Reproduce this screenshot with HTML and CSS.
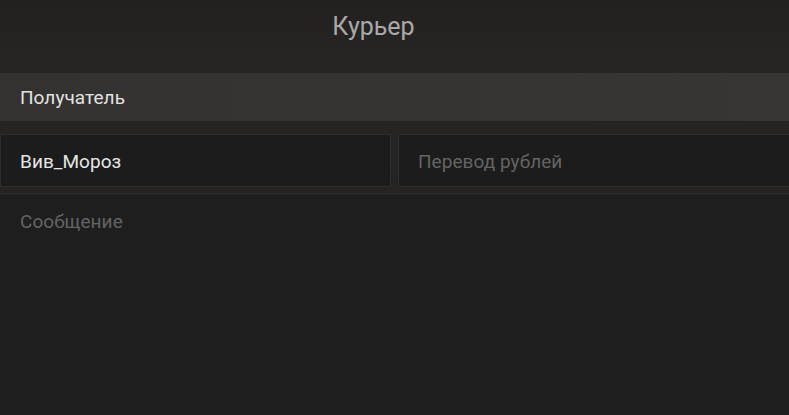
FILE: index.html
```html
<!DOCTYPE html>
<html lang="ru">
<head>
<meta charset="utf-8">
<title>Курьер</title>
<link rel="stylesheet" href="styles.css">
</head>
<body>
<div class="top">
  <header class="header">Курьер</header>
  <div class="recipient">Получатель</div>
  <div class="fields">
    <div class="field value">Вив_Мороз</div>
    <div class="field placeholder">Перевод рублей</div>
  </div>
</div>
<div class="message placeholder">Сообщение</div>
</body>
</html>
```
FILE: styles.css
```css
html, body {
  margin: 0;
  height: 100%;
}
body {
  background: #1e1e1e;
  font-family: Roboto, "Noto Sans", sans-serif;
  font-size: 19px;
  letter-spacing: 0.05px;
  overflow: hidden;
  display: flex;
  flex-direction: column;
}
.top {
  background: linear-gradient(180deg, #222120 0%, #272524 30%, #262423 100%);
  padding-bottom: 6px;
  border-bottom: 2px solid #2a2928;
}
.header {
  height: 52px;
  display: flex;
  align-items: center;
  justify-content: center;
  font-size: 25px;
  letter-spacing: 0;
  color: #a9a9a9;
  padding-right: 42px;
  padding-top: 1px;
  box-sizing: border-box;
  margin-bottom: 21px;
}
.recipient {
  height: 48px;
  display: flex;
  align-items: center;
  padding-left: 20px;
  background: linear-gradient(90deg, #343231 0%, #363433 50%, #383634 100%);
  color: #e2e2e2;
}
.fields {
  margin-top: 13px;
  display: grid;
  grid-template-columns: 391px 1fr;
  column-gap: 7px;
  height: 53px;
}
.field {
  background: #1c1c1c;
  border: 1px solid #2e2d2c;
  display: flex;
  align-items: center;
  padding-left: 19px;
  padding-top: 2px;
  box-sizing: border-box;
}
.fields .field:last-child {
  border-right: none;
}
.value {
  color: #e6e6e6;
}
.placeholder {
  color: #646464;
}
.message {
  flex: 1;
  padding: 15px 20px;
  background: #1e1e1e;
}
```
